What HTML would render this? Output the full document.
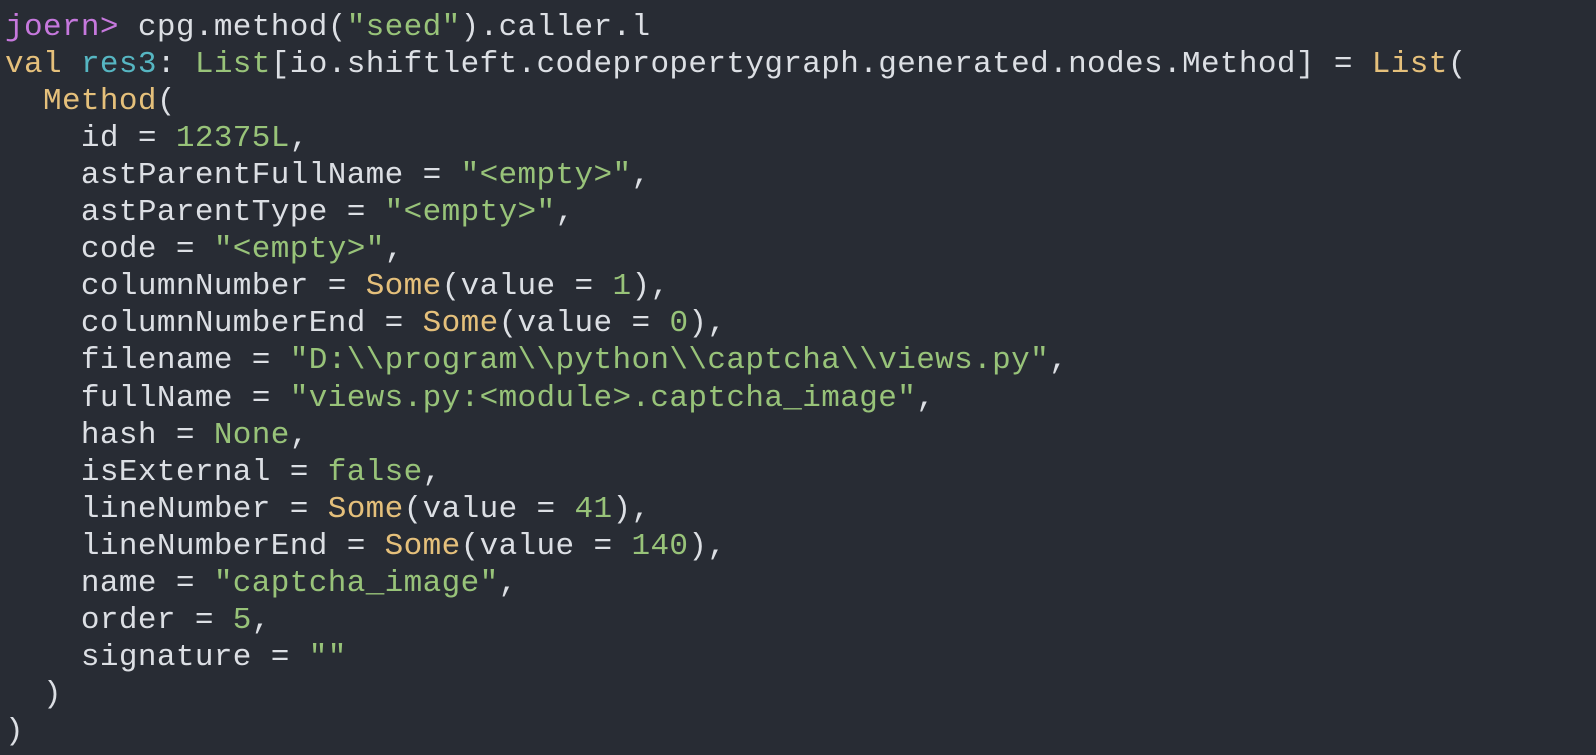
<!DOCTYPE html>
<html><head><meta charset="utf-8"><style>
html,body{margin:0;padding:0;background:#282c34;width:1596px;height:755px;overflow:hidden}
div.l{position:absolute;left:5px;height:36px;font-family:"Liberation Mono",monospace;font-size:31px;line-height:36px;color:#dcdfe4;white-space:pre;letter-spacing:0.38px}
.p{color:#c678dd}.g{color:#98c379}.y{color:#e5c07b}.c{color:#56b6c2}
</style></head><body>
<div class="l" style="top:10px"><span class="p">joern&gt;</span> cpg.method(<span class="g">"seed"</span>).caller.l</div>
<div class="l" style="top:47.05px"><span class="y">val</span> <span class="c">res3</span>: <span class="g">List</span>[io.shiftleft.codepropertygraph.generated.nodes.Method] = <span class="y">List</span>(</div>
<div class="l" style="top:84.1px">  <span class="y">Method</span>(</div>
<div class="l" style="top:121.15px">    id = <span class="g">12375L</span>,</div>
<div class="l" style="top:158.2px">    astParentFullName = <span class="g">"&lt;empty&gt;"</span>,</div>
<div class="l" style="top:195.25px">    astParentType = <span class="g">"&lt;empty&gt;"</span>,</div>
<div class="l" style="top:232.3px">    code = <span class="g">"&lt;empty&gt;"</span>,</div>
<div class="l" style="top:269.35px">    columnNumber = <span class="y">Some</span>(value = <span class="g">1</span>),</div>
<div class="l" style="top:306.4px">    columnNumberEnd = <span class="y">Some</span>(value = <span class="g">0</span>),</div>
<div class="l" style="top:343.45px">    filename = <span class="g">"D:\\program\\python\\captcha\\views.py"</span>,</div>
<div class="l" style="top:380.5px">    fullName = <span class="g">"views.py:&lt;module&gt;.captcha_image"</span>,</div>
<div class="l" style="top:417.55px">    hash = <span class="g">None</span>,</div>
<div class="l" style="top:454.6px">    isExternal = <span class="g">false</span>,</div>
<div class="l" style="top:491.65px">    lineNumber = <span class="y">Some</span>(value = <span class="g">41</span>),</div>
<div class="l" style="top:528.7px">    lineNumberEnd = <span class="y">Some</span>(value = <span class="g">140</span>),</div>
<div class="l" style="top:565.75px">    name = <span class="g">"captcha_image"</span>,</div>
<div class="l" style="top:602.8px">    order = <span class="g">5</span>,</div>
<div class="l" style="top:639.85px">    signature = <span class="g">""</span></div>
<div class="l" style="top:676.9px">  )</div>
<div class="l" style="top:713.95px">)</div>
</body></html>
